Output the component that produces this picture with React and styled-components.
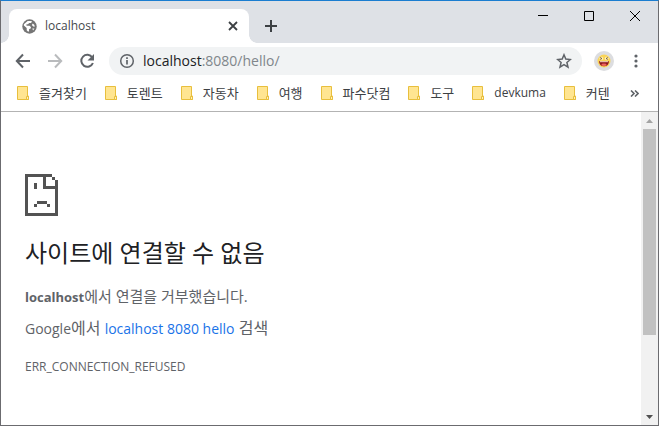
import React from "react";
import styled, { createGlobalStyle } from "styled-components";

const GlobalStyle = createGlobalStyle`
  * { box-sizing: border-box; }
  html, body, #root { height: 100%; margin: 0; }
  body { font-family: "Open Sans", "Noto Sans CJK KR", sans-serif; background: #fff; overflow: hidden; }
  button { border: 0; padding: 0; background: none; color: inherit; font: inherit; }
  svg { display: block; }
`;

const Window = styled.div`
  display: flex;
  flex-direction: column;
  min-height: 100vh;
  border: 1px solid #6b6b6f;
  border-top-color: #1a7dd0;
`;

const TabStrip = styled.header`
  display: flex;
  height: 42px;
  padding-left: 8px;
  background: #dee1e6;
`;

const Tab = styled.div`
  position: relative;
  display: flex;
  align-items: center;
  flex: 0 1 240px;
  height: 34px;
  margin-top: 8px;
  padding: 0 10px 0 13px;
  gap: 8px;
  border-radius: 8px 8px 0 0;
  background: #fff;
  color: #45494d;
  font-size: 12px;

  &::before, &::after {
    content: "";
    position: absolute;
    bottom: 0;
    width: 8px;
    height: 8px;
  }
  &::before { right: 100%; background: radial-gradient(circle at 0 0, #dee1e6 7.5px, #fff 8px); }
  &::after { left: 100%; background: radial-gradient(circle at 100% 0, #dee1e6 7.5px, #fff 8px); }
`;

const TabTitle = styled.span`
  flex: 1;
  line-height: 16px;
`;

const IconButton = styled.button`
  display: grid;
  place-items: center;
  flex: none;
  width: ${(p) => p.$size || 16}px;
  height: ${(p) => p.$size || 16}px;
  color: ${(p) => p.$color || "#5f6368"};
`;

const NewTab = styled(IconButton)`
  margin: 17px 0 0 14px;
`;

const WindowControls = styled.div`
  display: flex;
  margin-left: auto;
`;

const WindowButton = styled.button`
  display: grid;
  place-items: center;
  width: 46px;
  height: 29px;
`;

const Toolbar = styled.div`
  display: flex;
  align-items: center;
  height: 36px;
  padding: 0 14px;
  gap: 16px;
`;

const AddressBar = styled.div`
  display: flex;
  align-items: center;
  flex: 1;
  height: 28px;
  margin-right: -4px;
  margin-left: -2px;
  padding: 0 10px;
  gap: 8px;
  border-radius: 14px;
  background: #f1f3f4;
  color: #5f6368;
`;

const Address = styled.div`
  flex: 1;
  color: #80868b;
  font-size: 14px;
  line-height: 20px;
  outline: 0;
  b { color: #202124; font-weight: 400; }
`;

const Avatar = styled(IconButton)`
  margin-right: -2px;
  border-radius: 50%;
  background: #dcdde0;
`;

const Bookmarks = styled.nav`
  display: flex;
  align-items: center;
  height: 33px;
  padding: 0 19px 4px 16px;
  gap: 18px;
  border-bottom: 1px solid #b3b3b3;
`;

const Bookmark = styled.a`
  display: flex;
  align-items: center;
  gap: 9px;
  color: #3c4043;
  font-size: 13px;
  line-height: 16px;
  text-decoration: none;
  white-space: nowrap;
`;

const Latin = styled.span`
  font-size: ${(p) => p.$size}px;
  line-height: 16px;
`;

const More = styled(IconButton)`
  margin-left: auto;
`;

const Viewport = styled.div`
  display: flex;
  flex: 1;
`;

const Page = styled.main`
  flex: 1;
  padding: 62px 24px 0;
  color: #5f6368;
`;

const Heading = styled.h1`
  margin: 19px 0 13px;
  color: #202124;
  font-size: 24px;
  font-weight: 400;
  line-height: 36px;
`;

const Message = styled.p`
  margin: 0 0 8px;
  font-size: ${(p) => p.$size}px;
  line-height: 24px;
`;

const SearchLink = styled.a`
  color: #1a73e8;
  text-decoration: none;
`;

const ErrorCode = styled.div`
  margin-top: 16px;
  font-size: 12px;
  line-height: 22px;
`;

const ScrollBar = styled.div`
  display: flex;
  flex-direction: column;
  width: 17px;
  padding: 0 2px;
  background: #f1f1f1;
`;

const ScrollButton = styled.button`
  display: grid;
  place-items: center;
  height: 17px;
  color: ${(p) => p.$color};
`;

const ScrollTrack = styled.div`
  flex: 1;
`;

const ScrollThumb = styled.div`
  height: 74%;
  background: #c1c1c1;
`;

const Svg = ({ w = 16, h = w, box, children, ...rest }) => (
  <svg width={w} height={h} viewBox={box || `0 0 ${w} ${h}`} fill="none" stroke="currentColor" aria-hidden="true" {...rest}>
    {children}
  </svg>
);

const Globe = () => (
  <Svg w={15} box="0 0 16 16" stroke="none" color="#757575">
    <circle cx="8" cy="8" r="7.7" fill="currentColor" />
    <path d="M6 2.2h4.5l-.7 2H7.6L6.4 5.7H4.8v1.5H8l1.5 1.2v1.4l-2 1.2v2.4H6.3L5 12V9.7L2 7V5.6zM11.5 4.7l1.8 1.8v2l-1.5-.7-1.3-1.4zM11 10h2.3l-1.5 2.3z" fill="#fff" />
  </Svg>
);

const Folder = () => (
  <Svg w={13} h={15} stroke="#e8bf3d">
    <path d="M.5 .5h10v9.5h1v3.5h-11z" fill="#ffe591" />
    <path d="M9.5 13.5v-3h2v3z" fill="#fff0b8" />
  </Svg>
);

const SadPage = () => (
  <Svg w={33} h={42} stroke="none" fill="#535353" shapeRendering="crispEdges">
    <path fillRule="evenodd" d="M0 0H27V3H18V15H33V42H0ZM3 3V39H30V15H18V3Z" />
    <path d="M18 3h3v9h9V6h3v9H18ZM27 3h3v3h-3Z" />
    <path d="M9 9h3v6H9ZM12 27h10v3H12ZM9 30h3v3H9ZM22 30h3v3h-3Z" />
  </Svg>
);

const Smile = () => (
  <Svg w={14} stroke="none">
    <circle cx="7" cy="7" r="6.5" fill="#f9d458" />
    <circle cx="4.3" cy="4.5" r="1.8" fill="#fff3c5" />
    <circle cx="9.7" cy="4.5" r="1.8" fill="#fff3c5" />
    <path d="M3 3.500l2 1L3.200 5.500M11 3.500l-2 1 1.800 1" stroke="#6c4b1b" strokeWidth=".8" />
    <path d="M2 7.2h10c-.2 3-2 5-5 5s-4.800-2-5-5z" fill="#8f171c" />
    <path d="M3 7.200h8v1H3z" fill="#f6dcc8" />
    <ellipse cx="7" cy="10.800" rx="2.600" ry="1.200" fill="#ee655c" />
  </Svg>
);

const bookmarks = ["즐겨찾기", "토렌트", "자동차", "여행", "파수닷컴", "도구", "devkuma", "커텐"];

export default function App() {
  return (
    <>
      <GlobalStyle />
      <Window>
        <TabStrip>
          <Tab>
            <Globe />
            <TabTitle>localhost</TabTitle>
            <IconButton $size={12} $color="#3c4043" aria-label="탭 닫기">
              <Svg w={10} strokeWidth="1.8"><path d="M1 1l8 8M9 1L1 9" /></Svg>
            </IconButton>
          </Tab>
          <NewTab $color="#3c4043" aria-label="새 탭">
            <Svg w={12} strokeWidth="2"><path d="M6 0v12M0 6h12" /></Svg>
          </NewTab>
          <WindowControls>
            <WindowButton aria-label="최소화"><Svg w={10} color="#000"><path d="M0 4.500h10" /></Svg></WindowButton>
            <WindowButton aria-label="최대화"><Svg w={10} color="#000"><path d="M.5 .5h9v9h-9z" /></Svg></WindowButton>
            <WindowButton aria-label="닫기"><Svg w={10} color="#000"><path d="M0 0l10 10M10 0L0 10" /></Svg></WindowButton>
          </WindowControls>
        </TabStrip>
        <Toolbar>
          <IconButton aria-label="뒤로">
            <Svg strokeWidth="2"><path d="M15 8H2.500M8 1.500L1.800 8L8 14.500" /></Svg>
          </IconButton>
          <IconButton $color="#b9bbbd" aria-label="앞으로">
            <Svg strokeWidth="2"><path d="M1 8h12.500M8 1.500L14.200 8L8 14.500" /></Svg>
          </IconButton>
          <IconButton aria-label="새로고침">
            <Svg strokeWidth="2"><path d="M13.300 4.500A6 6 0 1 0 13.900 10" /><path d="M15 1v6.500H8.500z" fill="currentColor" stroke="none" /></Svg>
          </IconButton>
          <AddressBar>
            <Svg w={16} strokeWidth="1.500"><circle cx="8" cy="8" r="6.300" /><path d="M8 7v4.500M8 4.300v1.700" strokeWidth="1.700" /></Svg>
            <Address role="textbox" contentEditable suppressContentEditableWarning aria-label="주소창" spellCheck={false}><b>localhost</b>:8080/hello/</Address>
            <IconButton aria-label="북마크에 추가">
              <Svg strokeWidth="1.500"><path d="M8 1.800l1.800 4.300 4.600.4-3.500 3 1.100 4.600-4-2.500-4 2.500 1.100-4.600-3.500-3 4.600-.4z" /></Svg>
            </IconButton>
          </AddressBar>
          <Avatar $size={20} aria-label="프로필"><Smile /></Avatar>
          <IconButton aria-label="메뉴">
            <Svg stroke="none" fill="currentColor"><circle cx="8" cy="3" r="1.600" /><circle cx="8" cy="8" r="1.600" /><circle cx="8" cy="13" r="1.600" /></Svg>
          </IconButton>
        </Toolbar>
        <Bookmarks aria-label="북마크">
          {bookmarks.map((name) => (
            <Bookmark key={name} href="#">
              <Folder />
              {/^[a-z]/.test(name) ? <Latin $size={12}>{name}</Latin> : name}
            </Bookmark>
          ))}
          <More $size={10} aria-label="북마크 더보기">
            <Svg w={9} h={7} strokeWidth="1.600"><path d="M1 .5l3 3-3 3M5 .5l3 3-3 3" /></Svg>
          </More>
        </Bookmarks>
        <Viewport>
          <Page>
            <SadPage />
            <Heading>사이트에 연결할 수 없음</Heading>
            <Message $size={15}><Latin as="strong" $size={13}>localhost</Latin>에서 연결을 거부했습니다.</Message>
            <Message $size={16}><Latin $size={14}>Google</Latin>에서 <SearchLink href="#"><Latin $size={14}>localhost 8080 hello</Latin></SearchLink> 검색</Message>
            <ErrorCode>ERR_CONNECTION_REFUSED</ErrorCode>
          </Page>
          <ScrollBar>
            <ScrollButton $color="#a3a3a3" aria-label="위로 스크롤"><Svg w={7} h={4} stroke="none" fill="currentColor"><path d="M0 4L3.500 0L7 4z" /></Svg></ScrollButton>
            <ScrollTrack><ScrollThumb /></ScrollTrack>
            <ScrollButton $color="#505050" aria-label="아래로 스크롤"><Svg w={7} h={4} stroke="none" fill="currentColor"><path d="M0 0h7L3.500 4z" /></Svg></ScrollButton>
          </ScrollBar>
        </Viewport>
      </Window>
    </>
  );
}
